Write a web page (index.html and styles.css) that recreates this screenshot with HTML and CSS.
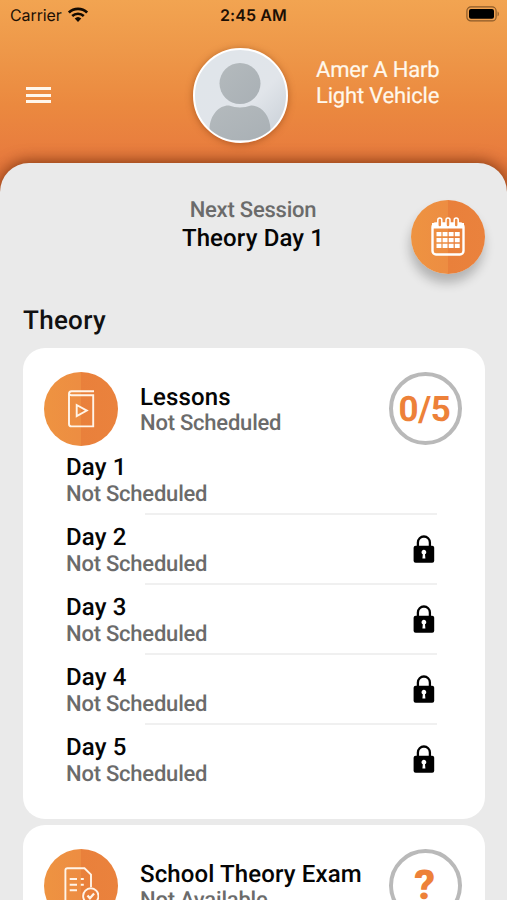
FILE: index.html
```html
<!DOCTYPE html>
<html lang="en">
<head>
<meta charset="utf-8">
<title>Theory</title>
<link rel="stylesheet" href="styles.css">
</head>
<body>
<header class="header">
  <div class="status">
    <div class="carrier"><span>Carrier</span>
      <svg class="wifi" viewBox="0 0 20 15" width="20" height="15"><g fill="none" stroke="#130a02"><path d="M.9 5.6a13 13 0 0 1 18.2 0" stroke-width="2.7"/><path d="M4.2 9a8.3 8.3 0 0 1 11.6 0" stroke-width="2.5"/></g><path d="M6.7 11.6a4.8 4.8 0 0 1 6.600 0L10 14.900z" fill="#130a02"/></svg>
    </div>
    <span class="clock">2:45 AM</span>
    <svg class="battery" viewBox="0 0 34 16" width="34" height="16"><rect x=".9" y=".9" width="29.2" height="14" rx="4" fill="none" stroke="#8b5a29" stroke-width="1.2"/><rect x="3" y="3" width="25" height="9.8" rx="2" fill="#000"/><path d="M31.6 5.5c1.6.5 1.6 4.3 0 4.8z" fill="#8b5a29"/></svg>
  </div>
  <div class="profile">
    <div class="menu"><i></i><i></i><i></i></div>
    <div class="avatar">
      <svg viewBox="0 0 90 90" width="90" height="90"><defs><linearGradient id="person" x2="1" y2="1"><stop offset="0" stop-color="#b4babd"/><stop offset="1" stop-color="#a9b0b5"/></linearGradient></defs><circle cx="45" cy="33.500" r="20.500" fill="url(#person)"/><path d="M14.500 79C15 64 25 55 34 55.500q11 4 22 0C66 55 75 65 75.500 79V90h-61z" fill="url(#person)"/></svg>
    </div>
    <div class="name">Amer A Harb<br>Light Vehicle</div>
  </div>
</header>
<main class="panel">
  <section class="next">
    <div class="next-text"><p class="sub">Next Session</p><p class="title">Theory Day 1</p></div>
    <div class="disc raised">
      <svg viewBox="0 0 36 40" width="36" height="40"><rect x="2.500" y="6.500" width="31" height="31" rx="3.500" fill="none" stroke="#fff" stroke-width="2.400"/><path d="M2 6h32v5.500H2z" fill="#fff"/><g fill="#ed8c43" stroke="#fff" stroke-width="1.500"><rect x="7.800" y="1" width="4" height="9" rx="2"/><rect x="16" y="1" width="4" height="9" rx="2"/><rect x="24.200" y="1" width="4" height="9" rx="2"/></g><path d="M6.500 17.200H30M6.500 23.100H30M6.500 28.800H30" stroke="#fff" stroke-width="4.200" stroke-dasharray="4.900 1.200"/></svg>
    </div>
  </section>
  <h1 class="heading">Theory</h1>
  <section class="card lessons">
    <div class="card-head">
      <div class="disc"><svg viewBox="0 0 28 40" width="28" height="40"><g fill="none" stroke="#fff4e8" stroke-width="1.900"><path d="M27 2.200H4.500Q2 2.200 2 5V35Q2 37.400 4.500 37.400H26.200V6.200H4.500Q2 6.200 2 4"/><path d="M9.700 16v11.200L19.800 21.600z"/></g></svg></div>
      <div class="text"><p class="title">Lessons</p><p class="sub">Not Scheduled</p></div>
      <div class="ring">0/5</div>
    </div>
    <ul class="days">
      <li class="day"><div><p class="title">Day 1</p><p class="sub">Not Scheduled</p></div></li>
      <li class="day"><div><p class="title">Day 2</p><p class="sub">Not Scheduled</p></div><svg class="lock" viewBox="0 0 22 28" width="22" height="28"><path d="M4.900 12V7.500a6 6 0 0 1 12 0V12" fill="none" stroke="#000" stroke-width="2.300"/><rect x=".6" y="10.800" width="20.600" height="17" rx="2" fill="#000"/><path d="M9.800 19.300a2.400 2.400 0 1 1 2.200 0l.4 4.200h-3z" fill="#fff"/></svg></li>
      <li class="day"><div><p class="title">Day 3</p><p class="sub">Not Scheduled</p></div><svg class="lock" viewBox="0 0 22 28" width="22" height="28"><path d="M4.900 12V7.500a6 6 0 0 1 12 0V12" fill="none" stroke="#000" stroke-width="2.300"/><rect x=".6" y="10.800" width="20.600" height="17" rx="2" fill="#000"/><path d="M9.800 19.300a2.400 2.400 0 1 1 2.200 0l.4 4.200h-3z" fill="#fff"/></svg></li>
      <li class="day"><div><p class="title">Day 4</p><p class="sub">Not Scheduled</p></div><svg class="lock" viewBox="0 0 22 28" width="22" height="28"><path d="M4.900 12V7.500a6 6 0 0 1 12 0V12" fill="none" stroke="#000" stroke-width="2.300"/><rect x=".6" y="10.800" width="20.600" height="17" rx="2" fill="#000"/><path d="M9.800 19.300a2.400 2.400 0 1 1 2.200 0l.4 4.200h-3z" fill="#fff"/></svg></li>
      <li class="day"><div><p class="title">Day 5</p><p class="sub">Not Scheduled</p></div><svg class="lock" viewBox="0 0 22 28" width="22" height="28"><path d="M4.900 12V7.500a6 6 0 0 1 12 0V12" fill="none" stroke="#000" stroke-width="2.300"/><rect x=".6" y="10.800" width="20.600" height="17" rx="2" fill="#000"/><path d="M9.800 19.300a2.400 2.400 0 1 1 2.200 0l.4 4.200h-3z" fill="#fff"/></svg></li>
    </ul>
  </section>
  <section class="card exam">
    <div class="card-head">
      <div class="disc"><svg viewBox="0 0 36 40" width="36" height="40"><g fill="none" stroke="#fff4e8" stroke-width="1.900"><path d="M18.500 37H4.500Q2.400 37 2.400 35V4.200Q2.400 2.200 4.500 2.200H21.500L28 8.600V21"/><circle cx="27.800" cy="30" r="7.700"/><path d="M24.500 29.500l2.400 2.700 4.200-4.700" stroke-width="2.300"/><path d="M6.700 13H14M6.700 18.700H14M6.700 24.200H14M17.800 13h3M17.800 18.700h3" stroke-width="2.100"/></g></svg></div>
      <div class="text"><p class="title">School Theory Exam</p><p class="sub">Not Available</p></div>
      <div class="ring mark">?</div>
    </div>
  </section>
</main>
</body>
</html>
```
FILE: styles.css
```css
* { box-sizing: border-box; margin: 0; padding: 0; }
html, body { height: 100%; overflow: hidden; }
body { width: 507px; height: 900px; font-family: Roboto, "Liberation Sans", sans-serif; text-rendering: geometricPrecision; background: linear-gradient(#f2a451 0, #ee9849 50px, #eb893f 105px, #e87c3e 155px, #dc6c34 200px); }
svg { display: block; flex: none; }
.header { height: 163px; }
.status { display: grid; grid-template-columns: 1fr auto 1fr; align-items: center; height: 30px; padding: 0 7px 0 10px; font-family: Inter, "Liberation Sans", sans-serif; font-size: 16px; color: #1c0f04; }
.carrier { display: flex; align-items: center; gap: 6px; letter-spacing: -.1px; }
.wifi { margin-top: -1px; }
.clock { margin-right: 3px; font-weight: 600; letter-spacing: .1px; }
.battery { justify-self: end; margin-top: -2px; }
.profile { display: flex; align-items: flex-start; padding: 18px 0 0 26px; }
.menu { width: 25px; margin-top: 39px; display: flex; flex-direction: column; gap: 3.700px; }
.menu i { height: 3px; background: #fff7ec; }
.avatar { width: 95px; height: 95px; margin-left: 142px; border: 2.500px solid #fff; border-radius: 50%; overflow: hidden; background: linear-gradient(135deg, #e0e5ea 20%, #e1e5ea 60%, #c6cdd5); box-shadow: 0 1px 7px rgba(120, 50, 10, .5); }
.name { margin: 10px 0 0 28px; font-size: 22px; line-height: 26px; letter-spacing: -.18px; color: #fff8ec; -webkit-text-stroke: .2px #fff8ec; white-space: nowrap; }
.panel { height: 737px; overflow: hidden; padding: 0 22px 0 23px; border-radius: 29px 29px 0 0; background: #eaeaea; box-shadow: 0 -1px 16px rgba(90, 30, 0, .75); }
.next { display: grid; grid-template-columns: 1fr 74px; height: 111px; padding-top: 35px; }
.next-text { padding-left: 72px; text-align: center; }
.next-text .title { line-height: 28px; }
.title { font-size: 24px; line-height: 26px; font-weight: 500; color: #050505; letter-spacing: .13px; white-space: nowrap; }
.sub { font-size: 22px; line-height: 26px; font-weight: 500; letter-spacing: -.22px; color: #6b6b6b; white-space: nowrap; }
.text .sub { line-height: 28px; }
.day .sub { line-height: 29px; }
.disc { display: flex; align-items: center; justify-content: center; flex: none; width: 74px; height: 74px; border-radius: 50%; background: linear-gradient(90deg, #ee9341 0, #ed8d42 50%, #e9803b 50%, #ea823d 100%); }
.raised { margin-top: 2px; box-shadow: -1px 9px 11px rgba(0, 0, 0, .24); }
.heading { height: 74px; padding-top: 31px; font-size: 26px; line-height: 32px; font-weight: 500; letter-spacing: .3px; color: #111; }
.card { border-radius: 22px; background: #fff; }
.lessons { height: 471px; margin-top: .3px; }
.exam { height: 200px; margin-top: 5.700px; }
.card-head { display: flex; align-items: flex-start; height: 97px; padding: 23px 23px 0 21px; }
.text { flex: 1; margin: 13px 0 0 22px; }
.lessons .disc { margin-top: .3px; }
.exam .disc, .exam .ring { margin-top: 1px; }
.ring { display: flex; align-items: center; justify-content: center; width: 73px; height: 73px; margin-top: 1px; border: 4px solid #b9b9b9; border-radius: 50%; padding: 2px 2px 0 0; font-size: 35px; line-height: 40px; font-weight: 700; letter-spacing: -.3px; color: #ed8139; }
.mark { font-size: 41px; font-weight: 900; }
.days { list-style: none; padding: 9px 48px 0 43px; }
.day { display: flex; justify-content: space-between; align-items: flex-start; height: 70px; background: linear-gradient(#f0f0f0, #f0f0f0) right 0 bottom 9px / 292px 2px no-repeat; }
.day:last-child { background: none; }
.lock { margin: 11px 2px 0 0; }
```
